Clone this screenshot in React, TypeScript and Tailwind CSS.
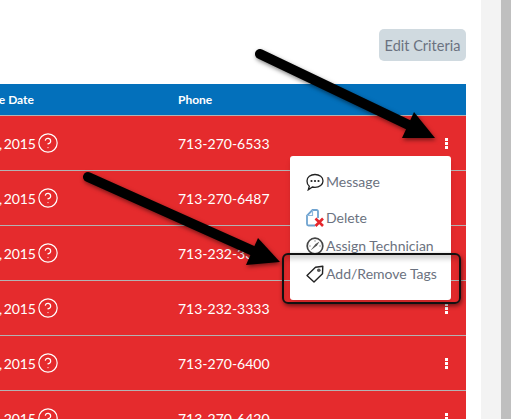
import { CircleHelp } from "lucide-react"

const phones = ["713-270-6533", "713-270-6487", "713-232-3333", "713-232-3333", "713-270-6400", "713-270-6420"]

function Kebab() {
    return (
        <div className="flex flex-col gap-[1px]">
            <div className="h-[3px] w-[3px] bg-white" />
            <div className="h-[3px] w-[3px] bg-white" />
            <div className="h-[3px] w-[3px] bg-white" />
        </div>
    )
}

function MessageIcon() {
    return (
        <svg width="18" height="18" viewBox="0 0 18 18" fill="none" className="shrink-0">
            <path d="M9 1.500c4.500 0 8 2.800 8 6.400s-3.500 6.400-8 6.400c-.9 0-1.800-.1-2.600-.3L2.300 16.800l1-3.500C1.800 12.100 1 10.100 1 7.900 1 4.300 4.500 1.500 9 1.500z" stroke="#222" strokeWidth="1.300" />
            <circle cx="5.500" cy="8" r="1.100" fill="#222" />
            <circle cx="9" cy="8" r="1.100" fill="#222" />
            <circle cx="12.500" cy="8" r="1.100" fill="#222" />
        </svg>
    )
}

function DeleteIcon() {
    return (
        <svg width="18" height="18" viewBox="0 0 18 18" fill="none" className="shrink-0">
            <path d="M12 9V2.500Q12 1 10.500 1H6.500L1 6.500V15q0 1.500 1.500 1.500H9" stroke="#6fa3d0" strokeWidth="1.800" />
            <path d="M6.500 1v5.500H1" stroke="#8fb8dc" strokeWidth="1.200" />
            <path d="M9.500 9.500l7.500 7.500M17 9.500L9.500 17" stroke="#e5262c" strokeWidth="2.600" />
        </svg>
    )
}

function GaugeIcon() {
    return (
        <svg width="18" height="18" viewBox="0 0 18 18" fill="none" className="shrink-0">
            <circle cx="9" cy="9" r="7.800" stroke="#444" strokeWidth="1.700" />
            <path d="M4.500 13.500 9.500 7l4-2.500L11 8.500z" fill="#555" />
            <path d="M9 3.200v1.500M14.800 9h-1.500M3.200 9h1.500" stroke="#888" strokeWidth="1" />
        </svg>
    )
}

function TagIcon() {
    return (
        <svg width="18" height="18" viewBox="0 0 18 18" fill="none" className="shrink-0">
            <path d="M1 10.500 9.500 2.300 16.800 1.200 16.500 8.800 8 17z" stroke="#222" strokeWidth="1.400" strokeLinejoin="round" />
            <circle cx="12.800" cy="5.300" r="1.800" fill="#555" />
        </svg>
    )
}

function MenuItem({ icon, label, className }: { icon: React.ReactNode; label: string; className: string }) {
    return (
        <div className={`flex items-center gap-[2px] ${className}`}>
            {icon}
            <span className="text-[14px] leading-5 text-[#6b7280]">{label}</span>
        </div>
    )
}

function Arrow({ x1, y1, x2, y2, head }: { x1: number; y1: number; x2: number; y2: number; head: string }) {
    return (
        <g>
            <line x1={x1} y1={y1} x2={x2} y2={y2} stroke="#000" strokeWidth="10" strokeLinecap="round" />
            <polygon points={head} fill="#000" />
        </g>
    )
}

export default function App() {
    return (
        <div className="relative flex h-[419px] w-[511px] overflow-hidden bg-white font-['Lato','Liberation_Sans',sans-serif]">
            <div className="w-[481px] shrink-0 pr-[15px] pt-[29px]">
                <div className="flex justify-end">
                    <button className="h-8 w-[87px] rounded-[5px] bg-[#d0dae0] pt-[2px] text-[14.500px] text-[#6b7280]">Edit Criteria</button>
                </div>
                <div className="mt-[23px] flex h-[31px] items-center bg-[#0370bb] text-[12px] font-bold text-white">
                    <div className="w-[178px] shrink-0">
                        <span className="-ml-[17px] block whitespace-nowrap">Due Date</span>
                    </div>
                    <div>Phone</div>
                </div>
                {phones.map((phone, i) => (
                    <div key={i} className="flex h-[55px] items-center border-t border-[#b3b3b3] bg-[#e52b2d] text-[14px] text-white">
                        <div className="w-[178px] shrink-0">
                            <div className="-ml-[1px] flex items-center gap-[1px]">
                                <span className="tracking-[-0.1px]">,&#8201;2015</span>
                                <CircleHelp size={22} strokeWidth={1.300} />
                            </div>
                        </div>
                        <div className="flex-1">{phone}</div>
                        <div className="mr-[18px]">
                            <Kebab />
                        </div>
                    </div>
                ))}
            </div>
            <div className="w-5 shrink-0 bg-[#f3f3f3]" />
            <div className="w-[10px] shrink-0 bg-[#bfbfbf]" />

            <div className="absolute left-[290px] top-[156px] flex h-[144px] w-[161px] flex-col rounded-[3px] bg-white pl-4 shadow-md">
                <MenuItem icon={<MessageIcon />} label="Message" className="mt-4" />
                <MenuItem icon={<DeleteIcon />} label="Delete" className="mt-[16px]" />
                <MenuItem icon={<GaugeIcon />} label="Assign Technician" className="mt-[8px]" />
                <MenuItem icon={<TagIcon />} label="Add/Remove Tags" className="mt-[8px]" />
            </div>
            <div className="absolute left-[282px] top-[253px] h-[51px] w-[179px] rounded-md border-2 border-[#111] shadow-[1px_2px_4px_rgba(0,0,0,0.5),inset_0_4px_5px_rgba(0,0,0,0.18)]" />

            <svg width="511" height="419" className="absolute left-0 top-0 drop-shadow-[1px_2px_2px_rgba(0,0,0,0.5)]">
                <Arrow x1={260} y1={54} x2={415} y2={128} head="435,138 402,138 414,112" />
                <Arrow x1={88} y1={177} x2={260} y2={254} head="280,262 246,265 258,238" />
            </svg>
        </div>
    )
}
